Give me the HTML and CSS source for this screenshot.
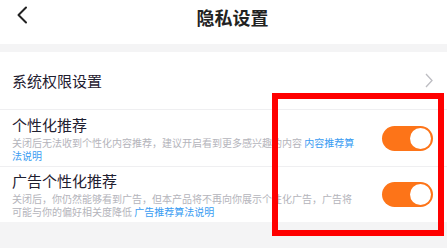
FILE: index.html
```html
<!DOCTYPE html>
<html lang="zh">
<head>
<meta charset="utf-8">
<link rel="stylesheet" href="styles.css">
</head>
<body>
<div class="page">
  <header class="header">
    <svg class="back" width="12" height="18" viewBox="0 0 12 18"><path d="M10 1.5 L2.5 9 L10 16.5" fill="none" stroke="#222" stroke-width="2" stroke-linecap="round" stroke-linejoin="round"/></svg>
    <h1 class="title">隐私设置</h1>
  </header>
  <div class="gap"></div>
  <section class="list">
    <div class="row row-link">
      <span class="row-title">系统权限设置</span>
      <svg class="chev" width="8" height="15" viewBox="0 0 8 15"><path d="M1 1 L7 7.5 L1 14" fill="none" stroke="#bdbdc2" stroke-width="1.3"/></svg>
    </div>
    <div class="row">
      <div class="row-text">
        <div class="row-title">个性化推荐</div>
        <p class="desc">关闭后无法收到个性化内容推荐，建议开启看到更多感兴趣的内容 <a class="link">内容推荐算法说明</a></p>
      </div>
      <span class="toggle"><span class="knob"></span></span>
    </div>
    <div class="row">
      <div class="row-text">
        <div class="row-title">广告个性化推荐</div>
        <p class="desc">关闭后，你仍然能够看到广告，但本产品将不再向你展示个性化广告，广告将可能与你的偏好相关度降低 <a class="link">广告推荐算法说明</a></p>
      </div>
      <span class="toggle"><span class="knob"></span></span>
    </div>
  </section>
  <div class="highlight"></div>
</div>
</body>
</html>
```

FILE: styles.css
```css
* { box-sizing: border-box; }
html, body { margin: 0; padding: 0; }
body {
  width: 447px;
  height: 248px;
  overflow: hidden;
  background: #f4f4f5;
  font-family: "Noto Sans CJK SC", "Noto Sans", sans-serif;
  color: #1f2030;
}
.page { position: relative; height: 248px; }
.header {
  height: 44px;
  background: #fff;
  display: flex;
  align-items: center;
  position: relative;
}
.back { position: absolute; left: 16px; top: 6px; }
.title {
  margin: 0;
  flex: 1;
  padding-left: 18px;
  text-align: center;
  font-size: 18px;
  font-weight: 700;
  color: #222;
  line-height: 24px;
  margin-top: -10px;
}
.gap { height: 8px; }
.list { background: #fff; }
.row {
  display: flex;
  align-items: center;
  justify-content: space-between;
  padding: 0 14px 0 12px;
  height: 57px;
  border-top: 1px solid #efeff1;
}
.row:first-child { border-top: none; }
.row:last-child { height: 56px; }
.row-title {
  font-size: 15px;
  line-height: 20px;
  color: #1f2030;
}
.row-text { width: 348px; }
.desc {
  margin: 1px 0 0;
  font-size: 10px;
  line-height: 13px;
  color: #b4b4bb;
}
.link { color: #3a9cf2; }
.chev { margin-right: 0; }
.toggle {
  width: 51px;
  height: 25px;
  border-radius: 13px;
  background: #fd7418;
  display: flex;
  align-items: center;
  justify-content: flex-end;
  padding-right: 2px;
  margin-right: 0;
}
.knob {
  width: 21px;
  height: 21px;
  border-radius: 50%;
  background: #fff;
}
.highlight {
  position: absolute;
  left: 272px;
  top: 93px;
  width: 172px;
  height: 143px;
  border: 6px solid #ff0000;
}
```
